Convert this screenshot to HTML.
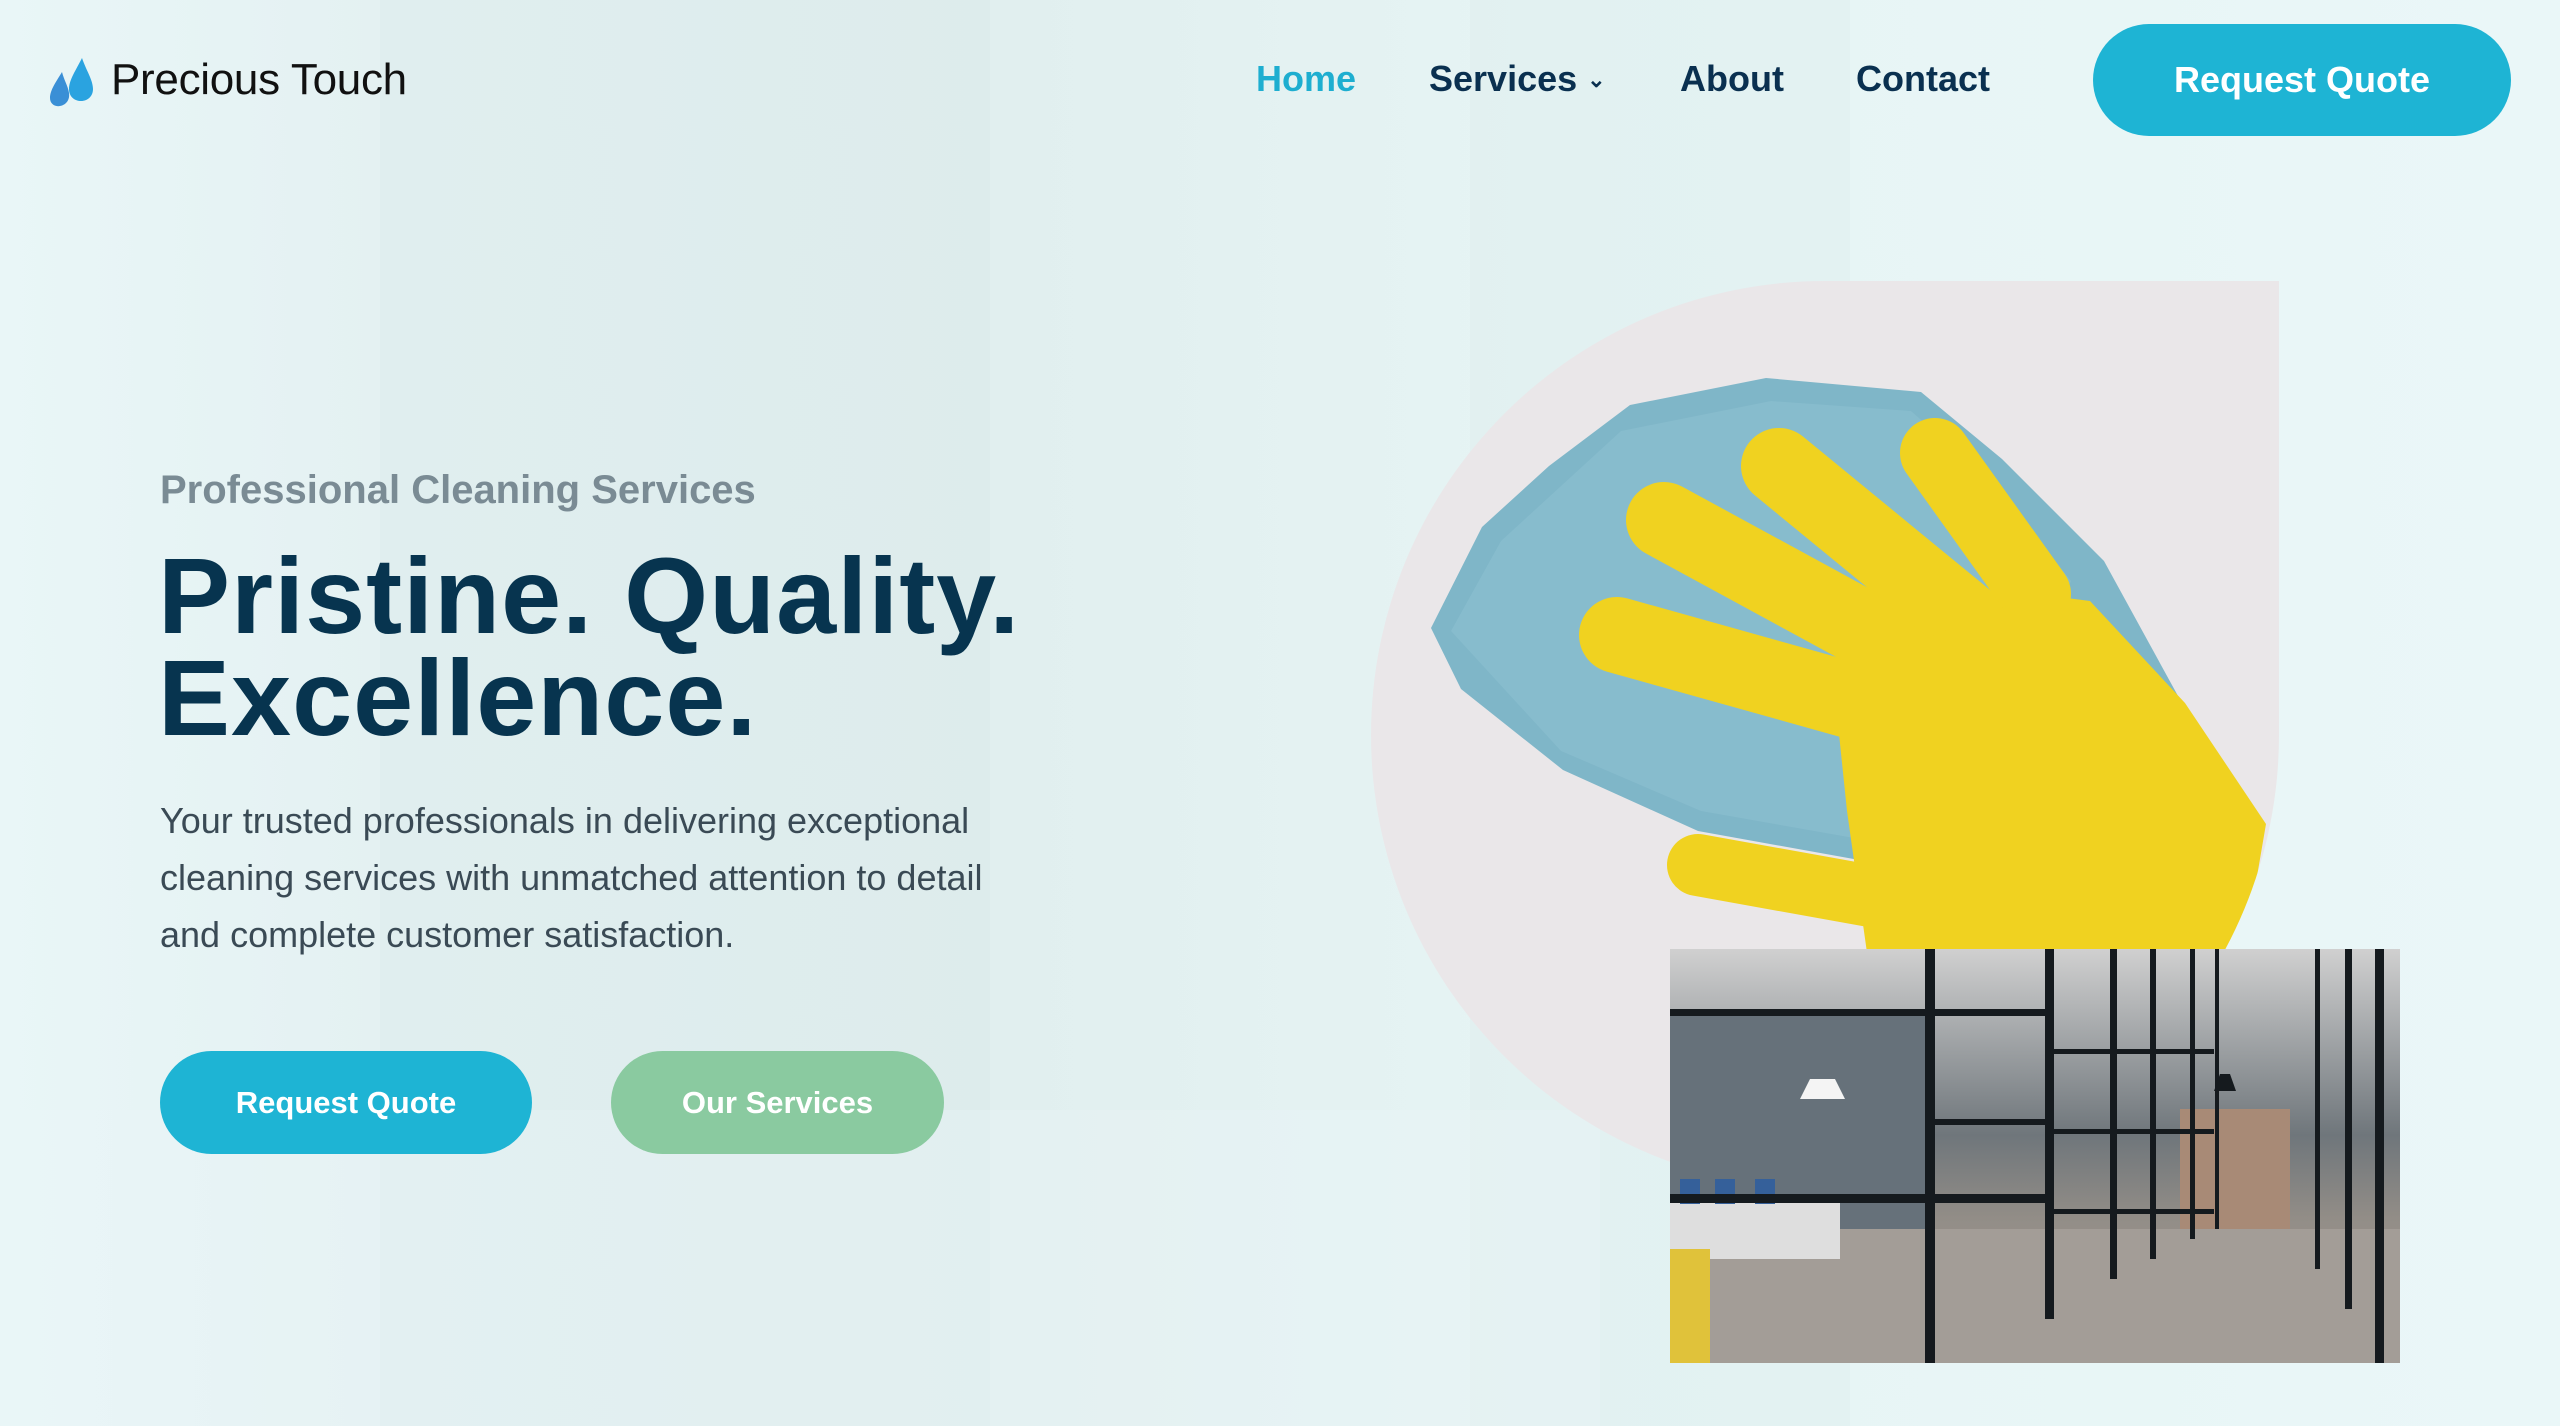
<!DOCTYPE html>
<html><head><meta charset="utf-8"><style>
*{margin:0;padding:0;box-sizing:border-box}
body{width:2560px;height:1426px;overflow:hidden;position:relative;font-family:"Liberation Sans",sans-serif;
background:linear-gradient(90deg,#e9f6f7 0%,#e4f1f2 15%,#e1efef 40%,#e6f4f4 60%,#eaf7f8 100%);}
.bgp{position:absolute}
.nav a{position:absolute;top:58px;font-size:36px;font-weight:bold;color:#0a3050;text-decoration:none;letter-spacing:0px}
.btn{position:absolute;color:#fff;font-weight:bold;display:flex;align-items:center;justify-content:center}
</style></head><body>
<div class="bgp" style="left:380px;top:0;width:610px;height:1426px;background:rgba(200,222,224,0.15)"></div>
<div class="bgp" style="left:1470px;top:0;width:380px;height:1426px;background:rgba(205,225,226,0.15)"></div>
<div class="bgp" style="left:0;top:1110px;width:1600px;height:316px;background:rgba(235,246,247,0.3)"></div>

<svg class="bgp" style="left:48px;top:56px" width="50" height="52" viewBox="0 0 50 52">
<path d="M14 16 C8 26 2 34 2 42 C2 48 7 51 12 50 C18 49 22 44 21 37 C20 30 16 24 14 16Z" fill="#3a8fd6"/>
<path d="M34 2 C28 14 21 24 21 33 C21 41 27 45 33 45 C40 45 45 40 45 33 C45 24 38 14 34 2Z" fill="#2aa3e0"/>
</svg>
<div style="position:absolute;left:111px;top:55px;font-size:44px;color:#111;letter-spacing:-0.3px">Precious Touch</div>

<div class="nav">
<a style="left:1256px;color:#1eaed0">Home</a>
<a style="left:1429px">Services <span style="font-size:22px;position:relative;top:-4px">&#8964;</span></a>
<a style="left:1680px">About</a>
<a style="left:1856px">Contact</a>
</div>
<div class="btn" style="left:2093px;top:24px;width:418px;height:112px;border-radius:56px;background:#1eb4d4;font-size:36px">Request Quote</div>

<div style="position:absolute;left:160px;top:468px;font-size:40px;font-weight:bold;color:#7a8b94">Professional Cleaning Services</div>
<div style="position:absolute;left:158px;top:545px;font-size:108px;line-height:102px;font-weight:bold;color:#07344f;letter-spacing:1px">Pristine. Quality.<br>Excellence.</div>
<div style="position:absolute;left:160px;top:792px;font-size:36px;line-height:57px;color:#3a4a55;width:1000px">Your trusted professionals in delivering exceptional<br>cleaning services with unmatched attention to detail<br>and complete customer satisfaction.</div>
<div class="btn" style="left:160px;top:1051px;width:372px;height:103px;border-radius:52px;background:#1eb4d4;font-size:31px">Request Quote</div>
<div class="btn" style="left:611px;top:1051px;width:333px;height:103px;border-radius:52px;background:#8acaa0;font-size:31px">Our Services</div>

<svg class="bgp" style="left:1371px;top:281px" width="908" height="908" viewBox="0 0 908 908">
<defs><clipPath id="c"><path d="M454 0 H908 V454 A454 454 0 1 1 454 0Z"/></clipPath></defs>
<g clip-path="url(#c)">
<rect width="908" height="908" fill="#eae7e9"/>
<polygon points="60,347 111,246 178,185 259,124 395,97 550,111 631,178 733,280 807,415 665,462 516,584 327,550 192,489 90,408" fill="#7fb6c8"/>
<polygon points="80,350 130,260 250,150 400,120 540,130 620,200 700,300 640,440 500,560 330,530 190,470" fill="#8cc0d0" opacity="0.6"/>
<g stroke="#f0d220" stroke-linecap="round">
<line x1="246" y1="354" x2="489" y2="422" stroke-width="76"/>
<line x1="293" y1="239" x2="530" y2="368" stroke-width="76"/>
<line x1="408" y1="185" x2="597" y2="340" stroke-width="76"/>
<line x1="564" y1="172" x2="665" y2="313" stroke-width="70"/>
<line x1="327" y1="584" x2="516" y2="618" stroke-width="62"/>
</g>
<polygon points="462,395 665,313 719,320 814,422 895,543 868,700 500,700 476,530" fill="#f0d220"/>
</g>
</svg>

<svg class="bgp" style="left:1670px;top:949px" width="730" height="414" viewBox="0 0 730 414">
<defs><linearGradient id="f" x1="0" y1="0" x2="0" y2="1"><stop offset="0" stop-color="#d0d0d0"/><stop offset="0.45" stop-color="#6f767b"/><stop offset="0.65" stop-color="#928d87"/><stop offset="1" stop-color="#a9a29b"/></linearGradient></defs>
<rect width="730" height="414" fill="url(#f)"/>
<rect x="0" y="60" width="260" height="220" fill="#66717a"/>
<rect x="510" y="160" width="110" height="120" fill="#a88a76"/>
<polygon points="0,280 730,280 730,414 0,414" fill="#a39d97"/>
<rect x="0" y="250" width="170" height="60" fill="#dedede"/>
<rect x="10" y="230" width="20" height="25" fill="#35609a"/><rect x="45" y="230" width="20" height="25" fill="#35609a"/><rect x="85" y="230" width="20" height="25" fill="#35609a"/>
<polygon points="140,130 165,130 175,150 130,150" fill="#f4f4f4"/>
<rect x="0" y="300" width="40" height="114" fill="#e0c23a"/>
<g fill="#151a1e">
<rect x="255" y="0" width="10" height="414"/><rect x="375" y="0" width="9" height="370"/>
<rect x="440" y="0" width="7" height="330"/><rect x="480" y="0" width="6" height="310"/>
<rect x="520" y="0" width="5" height="290"/><rect x="545" y="0" width="4" height="280"/>
<rect x="645" y="0" width="5" height="320"/><rect x="675" y="0" width="7" height="360"/><rect x="705" y="0" width="9" height="414"/>
<rect x="0" y="60" width="375" height="7"/><rect x="0" y="245" width="375" height="9"/>
<rect x="265" y="170" width="110" height="6"/><rect x="384" y="100" width="160" height="5"/><rect x="384" y="180" width="160" height="5"/>
<rect x="384" y="260" width="160" height="5"/>
<polygon points="550,125 560,125 566,142 544,142"/>
</g>
</svg>
</body></html>
